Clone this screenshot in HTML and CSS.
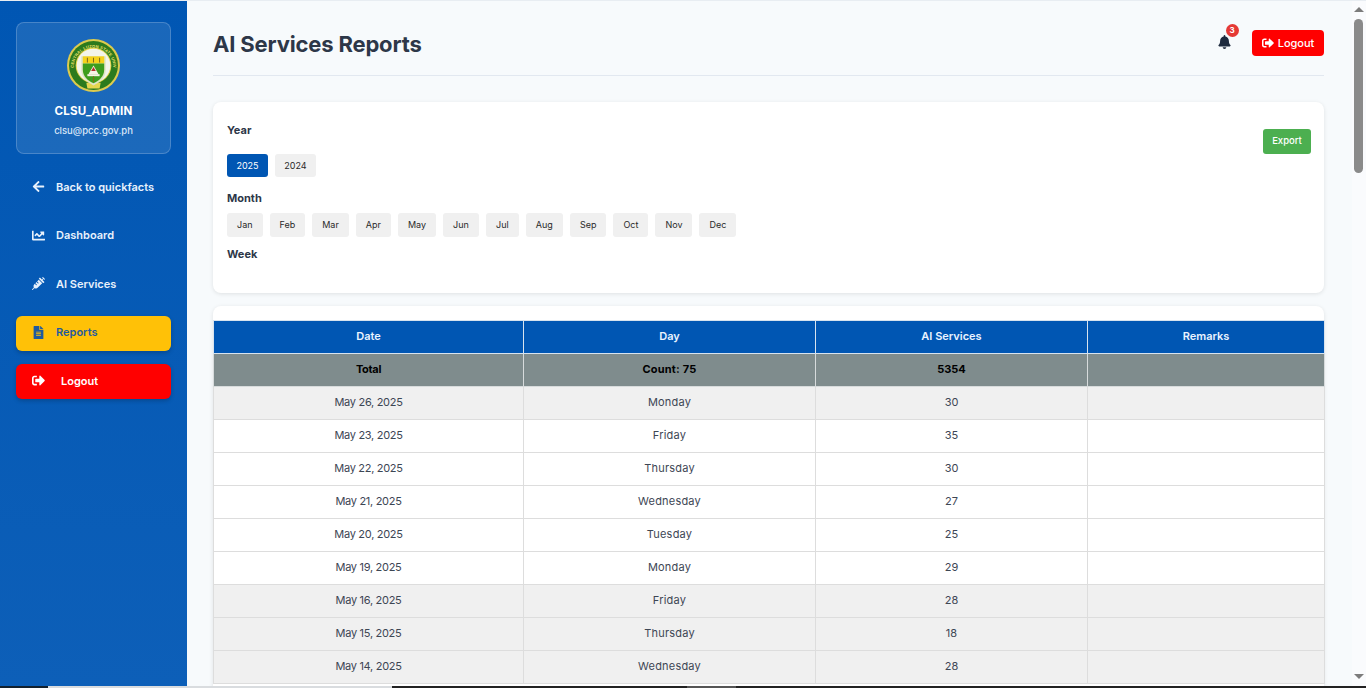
FILE: index.html
```html
<!DOCTYPE html>
<html lang="en">
<head>
<meta charset="utf-8">
<title>AI Services Reports</title>
<link rel="stylesheet" href="styles.css">
</head>
<body>
<svg class="defs" aria-hidden="true">
  <symbol id="i-left" viewBox="0 0 448 512"><path d="M257.5 445.1l-22.2 22.2c-9.4 9.4-24.6 9.4-33.9 0L7 273c-9.4-9.4-9.4-24.6 0-33.9L201.4 44.7c9.4-9.4 24.6-9.4 33.9 0l22.2 22.2c9.5 9.5 9.3 25-.4 34.3L136.6 216H424c13.3 0 24 10.7 24 24v32c0 13.3-10.7 24-24 24H136.6l120.5 114.8c9.8 9.3 10 24.8.4 34.3z"/></symbol>
  <symbol id="i-chart" viewBox="0 0 512 512"><path d="M496 384H64V80c0-8.84-7.16-16-16-16H16C7.16 64 0 71.16 0 80v336c0 17.67 14.33 32 32 32h464c8.84 0 16-7.16 16-16v-32c0-8.84-7.16-16-16-16zM464 96H345.94c-21.38 0-32.09 25.85-16.97 40.97l32.4 32.4L288 242.75l-73.37-73.37c-12.5-12.5-32.76-12.5-45.25 0l-68.69 68.69c-6.25 6.25-6.25 16.38 0 22.63l22.62 22.62c6.25 6.25 16.38 6.25 22.63 0L192 237.25l73.37 73.37c12.5 12.5 32.76 12.5 45.25 0l96-96 32.4 32.4c15.12 15.12 40.97 4.41 40.97-16.97V112c.01-8.84-7.15-16-15.99-16z"/></symbol>
  <symbol id="i-syringe" viewBox="0 0 512 512"><path d="M201.5 174.8l55.7 55.8c3.1 3.1 3.1 8.2 0 11.3l-11.3 11.3c-3.1 3.1-8.2 3.1-11.3 0l-55.7-55.8-45.3 45.3 55.8 55.8c3.1 3.1 3.1 8.2 0 11.3l-11.3 11.3c-3.1 3.1-8.2 3.1-11.3 0L111 265.2l-26.4 26.4c-17.3 17.3-25.6 41.1-23 65.4l7.1 63.6L2.3 487c-3.1 3.1-3.1 8.2 0 11.3l11.3 11.3c3.1 3.1 8.2 3.1 11.3 0l66.3-66.3 63.6 7.1c23.9 2.6 47.9-5.4 65.4-23l181.9-181.9-135.7-135.7-64.9 65zm308.2-93.3L430.5 2.3c-3.1-3.1-8.2-3.1-11.3 0l-11.3 11.3c-3.1 3.1-3.1 8.2 0 11.3l28.3 28.3-45.3 45.3-56.6-56.6-17-17c-3.1-3.1-8.2-3.1-11.3 0l-33.9 33.9c-3.1 3.1-3.1 8.2 0 11.3l17 17L424.8 223l17 17c3.1 3.1 8.2 3.1 11.3 0l33.9-34c3.1-3.1 3.1-8.2 0-11.3l-73.5-73.5 45.3-45.3 28.3 28.3c3.1 3.1 8.2 3.1 11.3 0l11.3-11.3c3.1-3.2 3.1-8.2 0-11.4z"/></symbol>
  <symbol id="i-file" viewBox="0 0 384 512"><path d="M224 136V0H24C10.7 0 0 10.7 0 24v464c0 13.3 10.7 24 24 24h336c13.3 0 24-10.7 24-24V160H248c-13.2 0-24-10.8-24-24zm64 236c0 6.6-5.4 12-12 12H108c-6.6 0-12-5.4-12-12v-8c0-6.6 5.4-12 12-12h168c6.6 0 12 5.4 12 12v8zm0-64c0 6.6-5.4 12-12 12H108c-6.6 0-12-5.4-12-12v-8c0-6.6 5.4-12 12-12h168c6.6 0 12 5.4 12 12v8zm0-72v8c0 6.6-5.4 12-12 12H108c-6.6 0-12-5.4-12-12v-8c0-6.6 5.4-12 12-12h168c6.6 0 12 5.4 12 12zm96-114.1v6.1H256V0h6.1c6.4 0 12.5 2.5 17 7l97.9 98c4.5 4.5 7 10.6 7 16.9z"/></symbol>
  <symbol id="i-out" viewBox="0 0 512 512"><path d="M497 273L329 441c-15 15-41 4.5-41-17v-96H152c-13.3 0-24-10.7-24-24v-96c0-13.3 10.7-24 24-24h136V88c0-21.4 25.9-32 41-17l168 168c9.3 9.4 9.3 24.6 0 34zM192 436v-40c0-6.6-5.4-12-12-12H96c-17.7 0-32-14.3-32-32V160c0-17.7 14.3-32 32-32h84c6.6 0 12-5.4 12-12V76c0-6.6-5.4-12-12-12H96c-53 0-96 43-96 96v192c0 53 43 96 96 96h84c6.6 0 12-5.4 12-12z"/></symbol>
  <symbol id="i-bell" viewBox="0 0 448 512"><path d="M224 512c35.32 0 63.97-28.65 63.97-64H160.03c0 35.35 28.65 64 63.97 64zm215.39-149.71c-19.32-20.76-55.47-51.99-55.47-154.29 0-77.7-54.48-139.9-127.94-155.16V32c0-17.67-14.32-32-31.98-32s-31.98 14.33-31.98 32v20.84C118.56 68.1 64.08 130.3 64.08 208c0 102.3-36.15 133.53-55.47 154.29-6 6.45-8.66 14.16-8.61 21.71.11 16.4 12.98 32 32.1 32h383.8c19.12 0 32-15.6 32.1-32 .05-7.55-2.61-15.27-8.61-21.71z"/></symbol>
</svg>
<div class="app">
  <aside class="sidebar">
    <div class="profile">
      <svg class="seal" viewBox="0 0 104 104" role="img" aria-label="Central Luzon State University seal">
        <defs><path id="seal-arc" d="M13 56a39 39 0 0 1 78 0"/></defs>
        <circle cx="52" cy="52" r="52" fill="#dccb4e"/>
        <circle cx="52" cy="52" r="48" fill="#2c7a1d"/>
        <text class="seal-text"><textPath href="#seal-arc" startOffset="50%" text-anchor="middle">CENTRAL LUZON STATE UNIV</textPath></text>
        <path d="M38 86h28l-2 11H40z" fill="#e6d64f"/>
        <circle cx="52" cy="52" r="35" fill="#e6d64f"/>
        <circle cx="52" cy="52" r="33" fill="#f3f4ea"/>
        <path d="M28 34h48v26c0 16-11 25-24 31-13-6-24-15-24-31z" fill="#dfe4c4"/>
        <path d="M31 34h42v14H31z" fill="#f5d21c"/>
        <path d="M31 48h42v12c0 14-10 22-21 27-11-5-21-13-21-27z" fill="#3d9d1d"/>
        <path d="M52 52l10 17H42z" fill="#f6f3e6"/>
        <path d="M52 55l4.500 8h-9z" fill="#b5302a"/>
        <path d="M40 69h24v4H40z" fill="#f6f3e6"/>
        <path d="M51 73h2v12h-2zM39 37h2v9h-2zM63 37h2v9h-2zM51 37h2v9h-2z" fill="#7c6a1c"/>
      </svg>
      <div class="profile-name">CLSU_ADMIN</div>
      <div class="profile-mail">clsu@pcc.gov.ph</div>
    </div>
    <nav class="nav">
      <a class="nav-item"><svg class="nav-icon"><use href="#i-left"/></svg><span>Back to quickfacts</span></a>
      <a class="nav-item"><svg class="nav-icon"><use href="#i-chart"/></svg><span>Dashboard</span></a>
      <a class="nav-item"><svg class="nav-icon"><use href="#i-syringe"/></svg><span>AI Services</span></a>
      <a class="nav-item nav-active"><svg class="nav-icon"><use href="#i-file"/></svg><span>Reports</span></a>
      <a class="nav-item nav-logout"><svg class="nav-icon"><use href="#i-out"/></svg><span>Logout</span></a>
    </nav>
  </aside>
  <main class="main">
    <header class="topbar">
      <h1 class="title">AI Services Reports</h1>
      <div class="top-actions">
        <div class="bell"><svg class="bell-icon"><use href="#i-bell"/></svg><span class="badge">3</span></div>
        <button class="logout-btn"><svg class="logout-icon"><use href="#i-out"/></svg>Logout</button>
      </div>
    </header>
    <section class="card filters">
      <div class="filter-body">
        <div class="label label-year">Year</div>
        <div class="chips chips-year">
          <button class="chip chip-on">2025</button>
          <button class="chip">2024</button>
        </div>
        <div class="label label-month">Month</div>
        <div class="chips chips-month">
          <button class="chip">Jan</button><button class="chip">Feb</button><button class="chip">Mar</button><button class="chip">Apr</button><button class="chip">May</button><button class="chip">Jun</button><button class="chip">Jul</button><button class="chip">Aug</button><button class="chip">Sep</button><button class="chip">Oct</button><button class="chip">Nov</button><button class="chip">Dec</button>
        </div>
        <div class="label label-week">Week</div>
      </div>
      <button class="export">Export</button>
    </section>
    <section class="card table-card">
      <table class="report">
        <colgroup><col class="c1"><col class="c2"><col class="c3"><col class="c4"></colgroup>
        <thead><tr><th>Date</th><th>Day</th><th>AI Services</th><th>Remarks</th></tr></thead>
        <tbody>
          <tr class="total"><td>Total</td><td>Count: 75</td><td>5354</td><td></td></tr>
          <tr class="grey"><td>May 26, 2025</td><td>Monday</td><td>30</td><td></td></tr>
          <tr><td>May 23, 2025</td><td>Friday</td><td>35</td><td></td></tr>
          <tr><td>May 22, 2025</td><td>Thursday</td><td>30</td><td></td></tr>
          <tr><td>May 21, 2025</td><td>Wednesday</td><td>27</td><td></td></tr>
          <tr><td>May 20, 2025</td><td>Tuesday</td><td>25</td><td></td></tr>
          <tr><td>May 19, 2025</td><td>Monday</td><td>29</td><td></td></tr>
          <tr class="grey"><td>May 16, 2025</td><td>Friday</td><td>28</td><td></td></tr>
          <tr class="grey"><td>May 15, 2025</td><td>Thursday</td><td>18</td><td></td></tr>
          <tr class="grey"><td>May 14, 2025</td><td>Wednesday</td><td>28</td><td></td></tr>
        </tbody>
      </table>
    </section>
  </main>
  <div class="scrollbar">
    <span class="arrow-up"></span>
    <span class="thumb"></span>
    <span class="arrow-down"></span>
  </div>
</div>
<div class="strip">
  <span class="s1"></span><span class="s2"></span><span class="s3"></span><span class="s4"></span><span class="s5"></span>
</div>
</body>
</html>
```
FILE: styles.css
```css
* { box-sizing: border-box; }
html, body { margin: 0; height: 100%; overflow: hidden; }
body { font-family: "Inter", "Liberation Sans", sans-serif; color: #2d3748; background: #f7fafc; }
.defs { position: absolute; width: 0; height: 0; }
.app { display: flex; height: 688px; border-top: 1px solid #e8edf2; }

.sidebar { width: 187px; flex: none; padding: 21px 16px 0; background: linear-gradient(180deg, #0056b3, #0d5fb8); color: #fff; }
.profile { height: 132px; border: 1px solid rgba(255,255,255,.2); border-radius: 8px; background: rgba(255,255,255,.1); display: flex; flex-direction: column; align-items: center; padding-top: 16px; }
.seal { width: 53px; height: 53px; flex: none; }
.seal-text { font: 700 8px "Liberation Sans", sans-serif; fill: #f3e36a; letter-spacing: .3px; }
.profile-name { margin-top: 10px; font-size: 11.6px; line-height: 18px; font-weight: 700; letter-spacing: .2px; }
.profile-mail { margin-top: 3px; font-size: 9.5px; line-height: 15px; font-weight: 500; color: #d9e6f7; }

.nav { display: flex; flex-direction: column; gap: 13.5px; margin-top: 16px; }
.nav-item { display: flex; align-items: center; height: 35px; padding: 0 0 2px 16px; border-radius: 6px; font-size: 11px; font-weight: 600; color: #e8f1fc; }
.nav-icon { width: 13px; height: 13px; margin-right: 11px; fill: currentColor; flex: none; }
.nav-active { background: #ffc107; color: #1f5a9e; box-shadow: 0 2px 4px rgba(0,0,0,.2); }
.nav-logout { background: #ff0000; color: #fff; box-shadow: 0 2px 4px rgba(0,0,0,.2); }
.nav-logout span { margin-left: 5px; }

.main { flex: 1; min-width: 0; padding: 0 28px 0 26px; overflow: hidden; }
.topbar { display: flex; justify-content: space-between; align-items: center; height: 75px; border-bottom: 1px solid #e2e8f0; padding-top: 12px; margin-bottom: 26px; }
.title { margin: 0; font-size: 22px; line-height: 33px; font-weight: 700; letter-spacing: -.16px; color: #2d3748; }
.top-actions { display: flex; align-items: center; gap: 21px; margin-bottom: 3px; }
.bell { position: relative; width: 13px; height: 14px; margin-top: -2px; color: #1e2a3e; }
.bell-icon { width: 13px; height: 14px; fill: currentColor; display: block; }
.badge { position: absolute; top: -10.500px; left: 7.500px; width: 13px; height: 13px; border-radius: 50%; background: #e53935; color: #fff; font-size: 8px; line-height: 13px; font-weight: 700; text-align: center; }
.logout-btn { display: flex; align-items: center; justify-content: center; gap: 4px; width: 72px; height: 26px; border: 0; border-radius: 4px; background: #ff0000; color: #fff; font: 500 11px "Inter", sans-serif; }
.logout-icon { width: 12px; height: 12px; fill: currentColor; }

.card { background: #fff; border-radius: 8px; box-shadow: 0 1px 4px rgba(0,0,0,.1); }
.filters { display: flex; justify-content: space-between; align-items: flex-start; height: 191px; padding: 27px 13px 0 14px; margin-bottom: 13px; }
.label { font-size: 11px; line-height: 17px; font-weight: 700; color: #2d3748; }
.label-year { margin-top: -7px; }
.chips { display: flex; gap: 7px; }
.chips-year { margin-top: 15px; }
.chips-year .chip { height: 23px; width: 41px; padding: 0 0 1px; }
.label-month { margin-top: 13px; }
.chips-month { margin-top: 6px; }
.label-week { margin-top: 9px; }
.chip { height: 24px; padding: 0 10px 1px; border: 0; border-radius: 3px; background: #f0f0f0; color: #2a2a2a; font: 400 9px "Inter", sans-serif; min-width: 33px; }
.chips-year .chip-on { background: #0056b3; color: #fff; }
.export { width: 48px; height: 25px; padding: 0 0 2px; border: 0; border-radius: 3px; background: #4caf50; color: #fff; font: 500 9.5px "Inter", sans-serif; }

.table-card { min-height: 400px; padding-top: 14px; border-radius: 8px 8px 0 0; }
.report { width: 1111px; table-layout: fixed; border-collapse: collapse; font-size: 11px; }
.c1 { width: 310px; } .c2 { width: 292px; } .c3 { width: 272px; } .c4 { width: 237px; }
.report th, .report td { height: 33px; padding: 0 0 2px; text-align: center; border: 1px solid #ddd; }
.report th { background: #0056b3; color: #eaf3ff; font-weight: 600; border-color: #d7e3ef; }
.report td { color: #3d4654; }
.report td:first-child { letter-spacing: -.3px; }
.report td:nth-child(2) { letter-spacing: .2px; }
.report .total td { background: #7f8c8d; color: #000; font-weight: 700; border-color: #d7dbdc; }
.report .grey td { background: #f0f0f0; }

.scrollbar { position: relative; width: 14px; flex: none; background: #fafbfd; }
.arrow-up, .arrow-down { position: absolute; left: 2px; width: 0; height: 0; border-left: 5px solid transparent; border-right: 5px solid transparent; }
.arrow-up { top: 6px; border-bottom: 5px solid #7c7c7c; }
.arrow-down { top: 673px; border-top: 5px solid #7c7c7c; }
.thumb { position: absolute; top: 18px; left: 2px; width: 9px; height: 154px; border-radius: 5px; background: #8a8a8a; }

.strip { position: fixed; left: 0; right: 0; bottom: 0; height: 2px; display: flex; }
.s1 { width: 48px; background: #12202e; }
.s2 { width: 344px; background: #d9dcdf; }
.s3 { width: 295px; background: #222; }
.s4 { width: 49px; background: #555; }
.s5 { flex: 1; background: #222; }
```
